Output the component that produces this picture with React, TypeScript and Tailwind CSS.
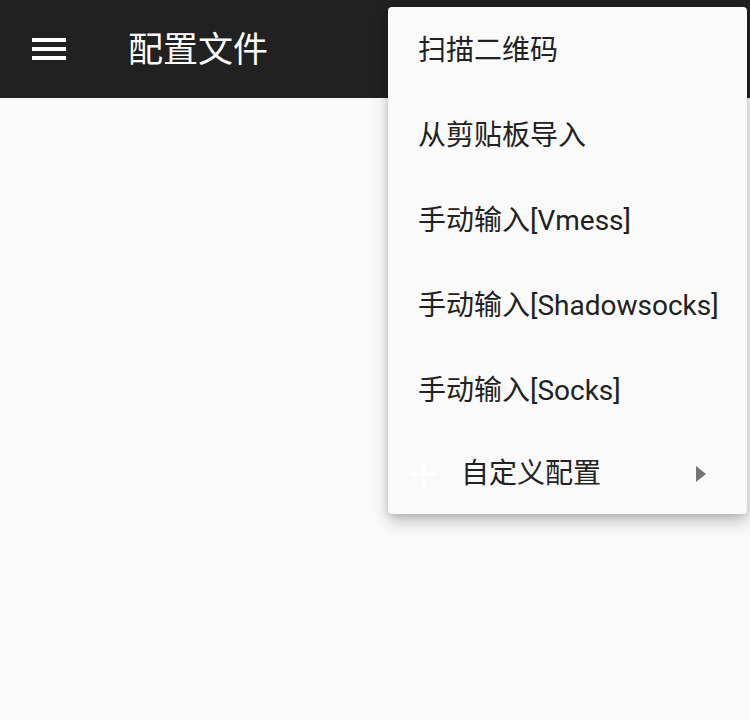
const font = { fontFamily: 'Roboto, "Noto Sans CJK SC", sans-serif' }

const items = ['扫描二维码', '从剪贴板导入', '手动输入[Vmess]', '手动输入[Shadowsocks]', '手动输入[Socks]']

export default function App() {
  return (
    <div className="relative w-[750px] h-[720px] bg-[#fafafa] overflow-hidden" style={font}>
      <header className="h-[98px] bg-[#212121] flex items-center">
        <div className="ml-[32px] w-[34px] flex flex-col gap-[5px]">
          <span className="block h-[4px] bg-white" />
          <span className="block h-[4px] bg-white" />
          <span className="block h-[4px] bg-white" />
        </div>
        <h1 className="ml-[62px] pt-[3px] text-[35px] leading-none text-white">配置文件</h1>
      </header>

      <div className="absolute left-[388px] top-[7px] w-[359px] bg-[#fafafa] rounded-[4px] shadow-[0_8px_16px_rgba(0,0,0,0.22),0_2px_6px_rgba(0,0,0,0.12)]">
        {items.map((t) => (
          <div key={t} className="h-[85px] flex items-center pl-[30px] pt-[2px] text-[28px] text-[#212121]">
            {t}
          </div>
        ))}
        <div className="h-[82px] flex items-center pt-[2px] text-[28px] text-[#212121]">
          <div className="ml-[23px] w-[25px] h-[25px] relative shrink-0">
            <span className="absolute left-[11px] top-0 w-[3px] h-[25px] bg-white" />
            <span className="absolute top-[11px] left-0 h-[3px] w-[25px] bg-white" />
          </div>
          <span className="ml-[25px]">自定义配置</span>
          <svg className="ml-auto mr-[41px]" width="10" height="16" viewBox="0 0 10 16">
            <path d="M0 0 L10 8 L0 16 Z" fill="#757575" />
          </svg>
        </div>
      </div>
    </div>
  )
}
